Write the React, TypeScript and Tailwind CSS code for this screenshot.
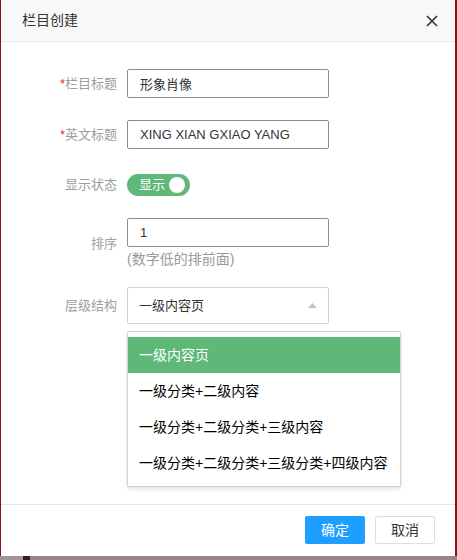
import { useState } from "react";

const font = { fontFamily: '"Liberation Sans", "Noto Sans CJK SC", sans-serif' };

const levels = [
  "一级内容页",
  "一级分类+二级内容",
  "一级分类+二级分类+三级内容",
  "一级分类+二级分类+三级分类+四级内容",
];

const Label = ({ text, required }: { text: string; required?: boolean }) => (
  <div className="w-[116px] shrink-0 text-right text-[13px] text-[#9e9e9e]">
    {required && <span className="text-[#ff2020]">*</span>}
    {text}
  </div>
);

const TextInput = ({ value }: { value: string }) => (
  <input
    readOnly
    value={value}
    className="h-[29px] w-[202px] border border-[#8c8c8c] rounded-[2px] pl-[12px] text-[13px] text-[#333] outline-none bg-white"
  />
);

const App = () => {
  const [selected] = useState(0);

  return (
    <div className="w-[457px] h-[560px] bg-[#8b1017] flex flex-col" style={font}>
      <div className="ml-[1px] mr-[2px] h-[556px] bg-white flex flex-col">
        {/* title bar */}
        <div className="h-[42px] shrink-0 bg-[#f8f8f8] border-b border-[#e8e8e8] flex items-center justify-between pl-[21px] pr-[17px]">
          <span className="text-[14px] text-[#333]">栏目创建</span>
          <svg width="12" height="12" viewBox="0 0 12 12">
            <path d="M1 1L11 11M11 1L1 11" stroke="#2f2f3a" strokeWidth="1.6" />
          </svg>
        </div>

        {/* form */}
        <div className="flex-1 pt-[27px] flex flex-col">
          <div className="flex items-center">
            <Label text="栏目标题" required />
            <div className="ml-[10px]">
              <TextInput value="形象肖像" />
            </div>
          </div>

          <div className="flex items-center mt-[22px]">
            <Label text="英文标题" required />
            <div className="ml-[10px]">
              <TextInput value="XING XIAN GXIAO YANG" />
            </div>
          </div>

          <div className="flex items-center mt-[25px] h-[22px]">
            <Label text="显示状态" />
            <div className="ml-[10px] w-[63px] h-[22px] rounded-full bg-[#5fb878] flex items-center justify-between pl-[12px] pr-[5px]">
              <span className="text-[13px] text-white">显示</span>
              <span className="w-4 h-4 rounded-full bg-white" />
            </div>
          </div>

          <div className="flex items-center mt-[22px]">
            <Label text="排序" />
            <div className="ml-[10px] flex flex-col">
              <TextInput value="1" />
              <span className="mt-[2px] leading-[20px] text-[14px] text-[#999]">(数字低的排前面)</span>
            </div>
          </div>

          <div className="flex items-center mt-[18px]">
            <Label text="层级结构" />
            <div className="ml-[10px] relative">
              <div className="h-[37px] w-[202px] border border-[#d2d2d2] rounded-[2px] pl-[11px] pr-[11px] flex items-center justify-between text-[13px] text-[#333]">
                <span>{levels[selected]}</span>
                <svg width="9" height="5" viewBox="0 0 9 5">
                  <path d="M4.5 0L9 5H0Z" fill="#c2c2c2" />
                </svg>
              </div>
              <div className="absolute left-0 top-[44px] z-10 w-[274px] bg-white border border-[#d2d2d2] rounded-[2px] py-[5px] shadow-[0_2px_4px_rgba(0,0,0,0.12)]">
                {levels.map((level, index) => (
                  <div
                    key={index}
                    className={
                      index === selected
                        ? "h-[36px] leading-[36px] pl-[11px] text-[14px] bg-[#5fb878] text-white"
                        : "h-[36px] leading-[36px] pl-[11px] text-[14px] text-black"
                    }
                  >
                    {level}
                  </div>
                ))}
              </div>
            </div>
          </div>
        </div>

        {/* buttons */}
        <div className="h-[52px] shrink-0 border-t border-[#e6e6e6] pt-[11px] pr-[20px] flex justify-end gap-[10px]">
          <button className="h-[28px] px-[15px] border border-[#1e9fff] bg-[#1e9fff] rounded-[2px] text-[14px] text-white">
            确定
          </button>
          <button className="h-[28px] px-[15px] border border-[#dedede] bg-white rounded-[2px] text-[14px] text-[#333]">
            取消
          </button>
        </div>
      </div>

      <div className="h-[4px] flex">
        <div className="w-[23px] bg-[#a39297]" />
        <div className="w-[7px] bg-[#2e1f27]" />
        <div className="flex-1 bg-[#9b8589]" />
      </div>
    </div>
  );
};

export default App;
